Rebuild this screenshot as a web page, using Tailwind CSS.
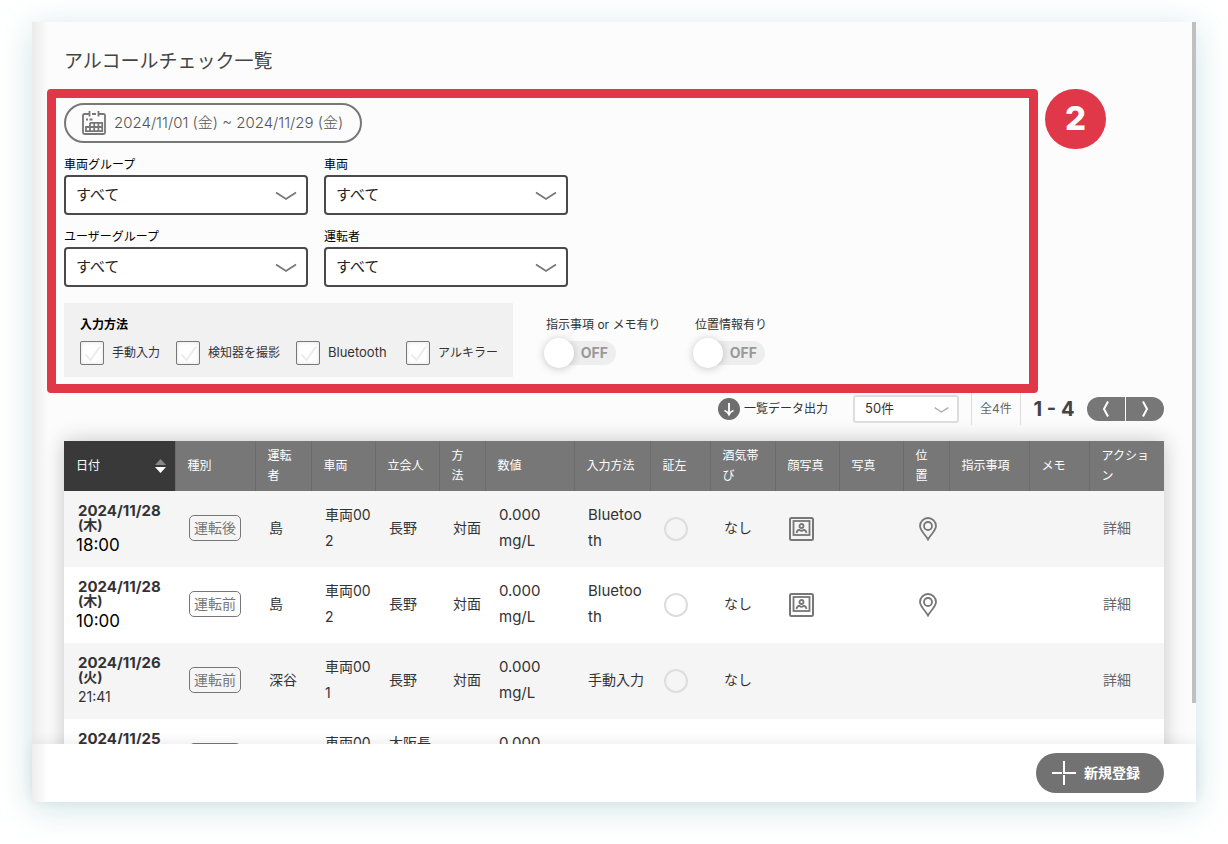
<!DOCTYPE html>
<html lang="ja">
<head>
    <meta charset="UTF-8">
    <meta name="viewport" content="width=device-width, initial-scale=1.0">
    <title>アルコールチェック一覧</title>
    <script src="https://cdn.jsdelivr.net/npm/@tailwindcss/browser@4"></script>
</head>
<body class="bg-white font-['Inter','Noto_Sans_CJK_JP',sans-serif] text-[#333]">

<!-- アイコン定義 -->
<svg class="hidden">
    <symbol id="chevron" viewBox="0 0 22 10"><path d="M1 1.5 L11 8 L21 1.5" fill="none" stroke="currentColor" stroke-width="1.8"/></symbol>
    <symbol id="face" viewBox="0 0 25 24" fill="none" stroke="currentColor">
        <rect x="1" y="1" width="23" height="22" rx="1.5" stroke-width="2"/>
        <rect x="4.5" y="4" width="16" height="14" stroke-width="1.8"/>
        <circle cx="12.5" cy="9" r="2" stroke-width="1.8"/>
        <path d="M7.5 16 C8 13.5 9.5 12.8 10.5 13 Q12.5 14.5 14.5 13 C15.5 12.8 17 13.5 17.5 16" stroke-width="1.8"/>
    </symbol>
    <symbol id="pin" viewBox="0 0 18 24" fill="none" stroke="currentColor" stroke-width="1.8">
        <path d="M9 22.5 C7 18.5 1 13.5 1 9 A8 8 0 0 1 17 9 C17 13.5 11 18.5 9 22.5 Z"/>
        <circle cx="9" cy="9" r="4"/>
    </symbol>
</svg>

<div class="h-screen pt-[22px] px-8 pb-[42px]">
    <div class="relative flex flex-col h-full bg-[#fcfcfc] shadow-[0_6px_32px_rgba(110,170,180,0.32)]">
        <main class="relative flex-1 min-h-0 overflow-hidden px-8 pt-[26px]">
            <h1 class="text-[19px] leading-7 mb-[13px] text-[#444]">アルコールチェック一覧</h1>

            <!-- 絞り込み -->
            <section class="relative -ml-[17px] mr-[126px] border-9 border-[#e03749] rounded-[4px] pt-[5px] pl-2 pb-[7px]">
                <button type="button" class="flex items-center gap-2 w-[298px] h-10 pl-4 border-2 border-[#777] rounded-full text-[15px] font-light text-[#555] whitespace-nowrap">
                    <svg class="w-6 h-6 shrink-0" viewBox="0 0 24 24" fill="none" stroke="#777" stroke-width="1.8">
                        <path d="M5 3 H2.500 Q1 3 1 4.500 V21.500 Q1 23 2.500 23 H21.500 Q23 23 23 21.500 V4.500 Q23 3 21.500 3 H19 M10 3 H14"/>
                        <path d="M7.500 0 V5.500 M16.500 0 V5.500 M5 3 H7.500 M16.500 3 H19"/>
                        <path d="M4 8.500 H6 M7.500 8.500 H10.500"/>
                        <path d="M8 11.800 H20.200 V20.200 H4 V16 H20.200 M8 11.800 V20.200 M12.200 11.800 V20.200 M16.400 11.800 V20.200"/>
                    </svg>
                    2024/11/01 (金) ~ 2024/11/29 (金)
                </button>

                <div class="grid grid-cols-[244px_244px] gap-x-4 gap-y-3 mt-3">
                    <label class="block text-xs text-black">
                        <span class="block pt-0.5 mb-0.5">車両グループ</span>
                        <span class="relative block">
                            <select class="block w-full h-10 px-[10px] appearance-none bg-white border-2 border-[#4a4a4a] rounded-[4px] text-[15px] text-[#222]"><option>すべて</option></select>
                            <svg class="absolute right-[11px] top-4 w-[22px] h-[10px] text-[#777] pointer-events-none"><use href="#chevron"/></svg>
                        </span>
                    </label>
                    <label class="block text-xs text-black">
                        <span class="block pt-0.5 mb-0.5">車両</span>
                        <span class="relative block">
                            <select class="block w-full h-10 px-[10px] appearance-none bg-white border-2 border-[#4a4a4a] rounded-[4px] text-[15px] text-[#222]"><option>すべて</option></select>
                            <svg class="absolute right-[11px] top-4 w-[22px] h-[10px] text-[#777] pointer-events-none"><use href="#chevron"/></svg>
                        </span>
                    </label>
                    <label class="block text-xs text-black">
                        <span class="block pt-0.5 mb-0.5">ユーザーグループ</span>
                        <span class="relative block">
                            <select class="block w-full h-10 px-[10px] appearance-none bg-white border-2 border-[#4a4a4a] rounded-[4px] text-[15px] text-[#222]"><option>すべて</option></select>
                            <svg class="absolute right-[11px] top-4 w-[22px] h-[10px] text-[#777] pointer-events-none"><use href="#chevron"/></svg>
                        </span>
                    </label>
                    <label class="block text-xs text-black">
                        <span class="block pt-0.5 mb-0.5">運転者</span>
                        <span class="relative block">
                            <select class="block w-full h-10 px-[10px] appearance-none bg-white border-2 border-[#4a4a4a] rounded-[4px] text-[15px] text-[#222]"><option>すべて</option></select>
                            <svg class="absolute right-[11px] top-4 w-[22px] h-[10px] text-[#777] pointer-events-none"><use href="#chevron"/></svg>
                        </span>
                    </label>
                </div>

                <div class="flex mt-4">
                    <fieldset class="bg-[#f1f1f1] px-4 pt-[14px] pb-3">
                        <p class="text-xs font-bold text-black mb-2">入力方法</p>
                        <div id="methods" class="grid grid-cols-[96px_120px_110px_91px] whitespace-nowrap"></div>
                    </fieldset>
                    <div id="switches" class="grid grid-cols-[149px_149px] pl-[33px] pt-[14px] text-xs"></div>
                </div>

                <div class="absolute left-full ml-4 -top-[9px] flex items-center justify-center w-[61px] h-[60px] rounded-full bg-[#e03749] text-white text-[33px] font-extrabold">2</div>
            </section>

            <!-- 件数・ページ送り -->
            <div class="flex items-center justify-end h-8 mb-4 text-xs">
                <button type="button" class="flex items-center gap-1 mr-[25px]">
                    <svg class="w-[22px] h-[22px]" viewBox="0 0 22 22">
                        <circle cx="11" cy="11" r="11" fill="#6e6e6e"/>
                        <path d="M11 5 V16 M6.500 12.500 Q9.500 13.500 11 16.500 Q12.500 13.500 15.500 12.500" fill="none" stroke="#fff" stroke-width="1.8"/>
                    </svg>
                    一覧データ出力
                </button>
                <span class="relative mr-3">
                    <select aria-label="表示件数" class="block w-[106px] h-7 pl-[10px] appearance-none bg-white border-2 border-[#ddd] rounded-[3px] text-[13px]"><option>50件</option></select>
                    <svg class="absolute right-[10px] top-[11px] w-[15px] h-[8px] text-[#aaa] pointer-events-none"><use href="#chevron"/></svg>
                </span>
                <span class="flex items-center justify-center w-[50px] h-full border-x border-[#ddd] text-[#666]">全4件</span>
                <span class="w-[66px] text-center text-xl font-bold text-[#444]">1 - 4</span>
                <span class="flex gap-px">
                    <button type="button" aria-label="前へ" class="flex items-center justify-center w-[38px] h-6 rounded-l-full bg-[#777]">
                        <svg class="w-2 h-4" viewBox="0 0 8 16"><path d="M6 0.500 L2 8 L6 15.500" fill="none" stroke="#fff" stroke-width="2"/></svg>
                    </button>
                    <button type="button" aria-label="次へ" class="flex items-center justify-center w-[38px] h-6 rounded-r-full bg-[#777]">
                        <svg class="w-2 h-4" viewBox="0 0 8 16"><path d="M2 0.500 L6 8 L2 15.500" fill="none" stroke="#fff" stroke-width="2"/></svg>
                    </button>
                </span>
            </div>

            <!-- 一覧テーブル -->
            <table class="w-full table-fixed bg-white text-sm leading-[26px] shadow-[0_0_20px_rgba(0,0,0,0.22)]">
                <thead class="bg-[#777] text-white text-xs leading-5">
                    <tr class="h-[50px] text-left break-all [&>th]:font-normal [&>th]:pl-3 [&>th]:py-0 [&>th+th]:border-l [&>th+th]:border-[#6c6c6c]">
                        <th class="w-[111px] bg-[#393939]">
                            <button type="button" class="flex items-center justify-between w-full pr-[9px]">
                                日付
                                <svg class="w-[11px] h-[14px]" viewBox="0 0 11 14"><path d="M0 6 L5.500 0 L11 6 Z" fill="#888"/><path d="M0 8 L5.500 14 L11 8 Z" fill="#fff"/></svg>
                            </button>
                        </th>
                        <th class="w-[80px]">種別</th>
                        <th class="w-[56px]"><span class="block w-6">運転者</span></th>
                        <th class="w-[64px]">車両</th>
                        <th class="w-[64px]">立会人</th>
                        <th class="w-[46px]"><span class="block w-3">方法</span></th>
                        <th class="w-[89px]">数値</th>
                        <th class="w-[76px]">入力方法</th>
                        <th class="w-[60px]">証左</th>
                        <th class="w-[65px]"><span class="block w-9">酒気帯び</span></th>
                        <th class="w-[64px]">顔写真</th>
                        <th class="w-[64px]">写真</th>
                        <th class="w-[46px]"><span class="block w-3">位置</span></th>
                        <th class="w-[80px]">指示事項</th>
                        <th class="w-[60px]">メモ</th>
                        <th class="w-[75px]"><span class="block w-12">アクション</span></th>
                    </tr>
                </thead>
                <tbody id="rows"></tbody>
            </table>
        </main>

        <!-- フッター -->
        <footer class="relative flex items-center justify-end h-[58px] px-8 bg-white shadow-[0_-2px_12px_rgba(0,0,0,0.08)]">
            <button type="button" class="flex items-center gap-2 h-10 pl-4 pr-6 rounded-full bg-[#727272] text-white text-sm font-bold">
                <svg class="w-6 h-6" viewBox="0 0 24 24"><path d="M12 0 V11 M12 14 V24 M0 12 H10 M11 12 H24" stroke="#fff" stroke-width="2"/></svg>
                新規登録
            </button>
        </footer>

        <!-- 左端の影とスクロールバー -->
        <div class="absolute left-0 inset-y-0 w-4 bg-linear-to-r from-black/7 to-transparent pointer-events-none"></div>
        <div class="absolute right-0 top-0 bottom-[99px] w-1 bg-[#c0c0c0]"></div>
    </div>
</div>

<script>
    const methods = ['手動入力', '検知器を撮影', 'Bluetooth', 'アルキラー'];
    const switches = ['指示事項 or メモ有り', '位置情報有り'];
    const checks = [
        { date: '2024/11/28', day: '木', time: '18:00', large: true, type: '運転後', driver: '島', car: '車両002', witness: '長野', input: 'Bluetooth', media: true },
        { date: '2024/11/28', day: '木', time: '10:00', large: true, type: '運転前', driver: '島', car: '車両002', witness: '長野', input: 'Bluetooth', media: true },
        { date: '2024/11/26', day: '火', time: '21:41', type: '運転前', driver: '深谷', car: '車両001', witness: '長野', input: '手動入力' },
        { date: '2024/11/25', day: '月', time: '18:00', type: '運転前', driver: '深谷', car: '車両001', witness: '大阪長野', input: '手動入力' },
    ];

    document.getElementById('methods').innerHTML = methods.map(name => `
        <label class="flex items-center gap-2 ${name === 'Bluetooth' ? 'text-[13px]' : 'text-xs'}">
            <span class="relative block w-6 h-6">
                <input type="checkbox" class="block w-6 h-6 appearance-none bg-white border border-[#777] rounded-[2px] shadow-[inset_0_0_4px_rgba(0,0,0,0.12)]">
                <svg class="absolute inset-0 w-6 h-6 pointer-events-none" viewBox="0 0 24 24"><path d="M5.500 13.500 L10.500 19 L20 5.500" fill="none" stroke="#ececec" stroke-width="2"/></svg>
            </span>
            ${name}
        </label>`).join('');

    document.getElementById('switches').innerHTML = switches.map(name => `
        <label class="block">
            <span class="block mb-2">${name}</span>
            <span class="relative flex items-center justify-end w-[70px] h-6 pr-2 text-sm font-bold text-[#999]">
                <input type="checkbox" role="switch" class="absolute inset-0 appearance-none rounded-full bg-[#eee]">
                <span class="absolute -left-0.5 -top-[3px] w-[30px] h-[30px] rounded-full bg-white shadow-[0_1px_8px_rgba(0,0,0,0.22)]"></span>
                <span class="relative">OFF</span>
            </span>
        </label>`).join('');

    document.getElementById('rows').innerHTML = checks.map(c => `
        <tr class="h-[76px] odd:bg-[#f5f5f5] break-all [&>td]:pl-[14px] [&>td]:pt-0 [&>td]:pb-[3px] [&>td:has(svg,.rounded-full)]:pb-0">
            <td class="align-top">
                <div class="pt-[13px] text-[15px] leading-[14px] font-bold">${c.date}<br><span class="text-sm leading-[14px]">(${c.day})</span></div>
                <div class="mt-[3px] leading-5 ${c.large ? '-ml-0.5 text-[17px] text-black' : 'text-sm'}">${c.time}</div>
            </td>
            <td><span class="flex items-center justify-center w-[52px] h-[26px] border border-[#777] rounded-[5px] text-[#777]">${c.type}</span></td>
            <td>${c.driver}</td>
            <td>${c.car}</td>
            <td>${c.witness}</td>
            <td>対面</td>
            <td class="text-[15px]">0.000<br>mg/L</td>
            <td class="pr-1 ${c.input === 'Bluetooth' ? 'text-[15px]' : 'text-sm'}">${c.input}</td>
            <td><span class="block w-6 h-6 border-2 border-[#ddd] rounded-full"></span></td>
            <td>なし</td>
            <td>${c.media ? '<svg class="block w-[25px] h-6 text-[#777]"><use href="#face"/></svg>' : ''}</td>
            <td></td>
            <td>${c.media ? '<svg class="block ml-0.5 w-[18px] h-6 text-[#777]"><use href="#pin"/></svg>' : ''}</td>
            <td></td>
            <td></td>
            <td><a href="#" class="text-[#666]">詳細</a></td>
        </tr>`).join('');
</script>
</body>
</html>
